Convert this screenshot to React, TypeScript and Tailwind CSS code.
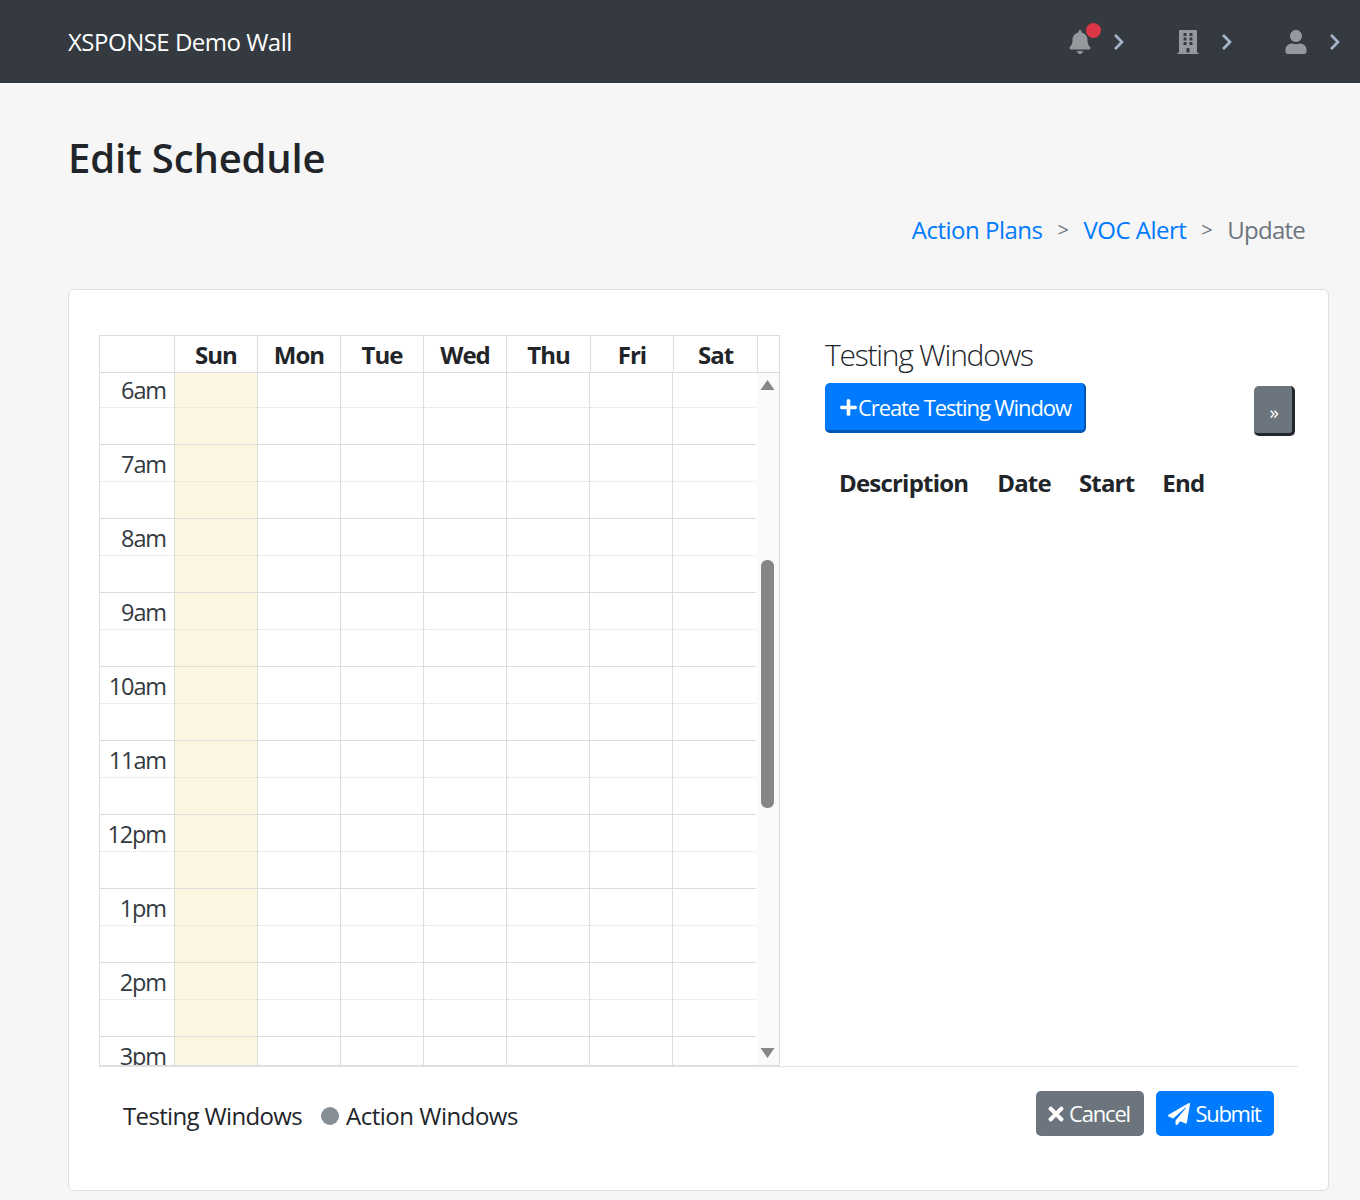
import { FaBell, FaBuilding, FaUser, FaChevronRight, FaPlus, FaTimes, FaPaperPlane } from "react-icons/fa";

const hours = ["6am", "7am", "8am", "9am", "10am", "11am", "12pm", "1pm", "2pm", "3pm"];
const days = ["Sun", "Mon", "Tue", "Wed", "Thu", "Fri", "Sat"];
const headWidths = ["w-[83px]", "w-[83px]", "w-[83px]", "w-[83px]", "w-[84px]", "w-[83px]", "w-[84px]"];

function NavItem({ children }: { children: React.ReactNode }) {
  return (
    <div className="flex items-center gap-[18px]">
      {children}
      <FaChevronRight className="text-[18px] text-[#a3b5c6]" />
    </div>
  );
}

function Column({ first, sun, last }: { first?: boolean; sun?: boolean; last?: boolean }) {
  return (
    <div className={`${first ? "w-[74px]" : last ? "w-[84px] border-l" : "w-[83px] border-l"} border-[#dddddd] ${sun ? "bg-[#fcf6e3]" : ""}`}>
      {hours.map((h) => (
        <div key={h}>
          <div className="h-[37px] border-b border-dotted border-[#dddddd] pr-[8px] text-right text-[23.5px] leading-[38px] tracking-[-1.1px] text-[#343a40]">
            {first ? h : ""}
          </div>
          <div className="h-[37px] border-b border-[#dddddd]" />
        </div>
      ))}
    </div>
  );
}

export default function App() {
  return (
    <div className="min-h-[1200px] bg-[#f6f6f6] font-['Open_Sans',sans-serif] text-[#212529] tracking-[-0.5px]">
      <nav className="flex h-[83px] items-center justify-between bg-[#343a40] pl-[68px] pr-[16px]">
        <span className="text-[24px] text-white">XSPONSE Demo Wall</span>
        <div className="flex items-center gap-[48px]">
          <NavItem>
            <div className="relative">
              <FaBell className="text-[24px] text-[#95989c]" />
              <span className="absolute -top-[7px] left-[18px] h-[15px] w-[15px] rounded-full bg-[#dc3545]" />
            </div>
          </NavItem>
          <NavItem>
            <FaBuilding className="text-[24px] text-[#95989c]" />
          </NavItem>
          <NavItem>
            <FaUser className="text-[24px] text-[#95989c]" />
          </NavItem>
        </div>
      </nav>

      <main className="pl-[68px] pr-[31px] pb-[9px]">
        <h1 className="pt-[44px] text-[40px] font-semibold leading-[62px] tracking-[-0.15px]">Edit Schedule</h1>
        <div className="mt-[21px] flex h-[40px] items-center justify-end gap-[15px] pr-[24px] text-[24px] text-[#6c757d]">
          <a className="text-[#007bff]">Action Plans</a>
          <span className="text-[20px]">&gt;</span>
          <a className="text-[#007bff]">VOC Alert</a>
          <span className="text-[20px]">&gt;</span>
          <span className="tracking-[-0.75px]">Update</span>
        </div>

        <section className="mt-[39px] h-[902px] rounded-[6px] border border-[#dfdfdf] bg-white px-[30px] pt-[45px]">
          <div className="flex h-[732px] w-[1199px] border-b border-[#dee2e6]">
            <div className="flex h-[731px] w-[681px] flex-col border border-[#dddddd]">
              <div className="flex h-[37px] shrink-0 border-b border-[#dddddd] text-[24px] font-bold leading-[38px] tracking-[-1px]">
                <div className="w-[74px]" />
                {days.map((d, i) => (
                  <div key={d} className={`${headWidths[i]} border-l border-[#dddddd] text-center`}>
                    {d}
                  </div>
                ))}
                <div className="flex-1 border-l border-[#dddddd]" />
              </div>
              <div className="flex min-h-0 flex-1">
                <div className="flex-1 overflow-hidden">
                  <div className="-mt-[2px] flex">
                    <Column first />
                    {days.map((d, i) => (
                      <Column key={d} sun={i === 0} last={i === 6} />
                    ))}
                  </div>
                </div>
                <div className="flex w-[22px] flex-col items-center bg-[#fafafa] pr-[1px]">
                  <svg viewBox="0 0 14 10" className="mt-[7px] h-[10px] w-[15px] shrink-0 fill-[#868686]">
                    <path d="M7 0 L14 10 L0 10 Z" />
                  </svg>
                  <div className="mt-[170px] h-[248px] w-[13px] shrink-0 rounded-[6px] bg-[#868686]" />
                  <svg viewBox="0 0 14 10" className="mt-[240px] h-[10px] w-[15px] shrink-0 fill-[#868686]">
                    <path d="M0 0 L14 0 L7 10 Z" />
                  </svg>
                </div>
              </div>
            </div>

            <div className="ml-[45px] flex-1">
              <h3 className="text-[30px] font-light leading-[40px] tracking-[-1.25px]">Testing Windows</h3>
              <div className="mt-[8px] flex items-start justify-between pr-[3px]">
                <button className="flex h-[50px] w-[261px] items-center whitespace-nowrap rounded-[5px] border-r-2 border-b-[3px] border-[#0056b3] bg-[#007bff] pl-[14px] pt-[2px] text-[22px] tracking-[-1.1px] text-white">
                  <FaPlus className="shrink-0 text-[19px]" />
                  Create Testing Window
                </button>
                <button className="mt-[3px] h-[50px] w-[41px] rounded-[5px] border-r-[3px] border-b-[3px] border-[#23272b] bg-[#6c757d] pl-[2px] pt-[5px] text-[19px] text-white">
                  »
                </button>
              </div>
              <div className="mt-[29px] flex text-[24px] font-bold leading-[36px] tracking-[-0.8px]">
                <span className="ml-[14px]">Description</span>
                <span className="ml-[29px]">Date</span>
                <span className="ml-[28px]">Start</span>
                <span className="ml-[28px]">End</span>
              </div>
            </div>
          </div>

          <div className="flex w-[1199px] items-start justify-between pl-[24px] pr-[24px] pt-[24px]">
            <div className="mt-[6px] flex items-center text-[24px] leading-[38px]">
              <span className="tracking-[-0.65px]">Testing Windows</span>
              <span className="ml-[19px] mr-[7px] h-[18px] w-[18px] rounded-full bg-[#868e96]" />
              <span>Action Windows</span>
            </div>
            <div className="flex gap-[12px]">
              <button className="flex h-[45px] w-[108px] items-center justify-center gap-[2px] rounded-[5px] bg-[#6c757d] pr-[5px] text-[22px] tracking-[-1.2px] text-white">
                <FaTimes className="text-[22px]" />
                Cancel
              </button>
              <button className="flex h-[45px] w-[118px] items-center justify-center gap-[6px] rounded-[5px] bg-[#007bff] pr-[2px] text-[22px] tracking-[-1.3px] text-white">
                <FaPaperPlane className="text-[22px]" />
                Submit
              </button>
            </div>
          </div>
        </section>
      </main>
    </div>
  );
}
